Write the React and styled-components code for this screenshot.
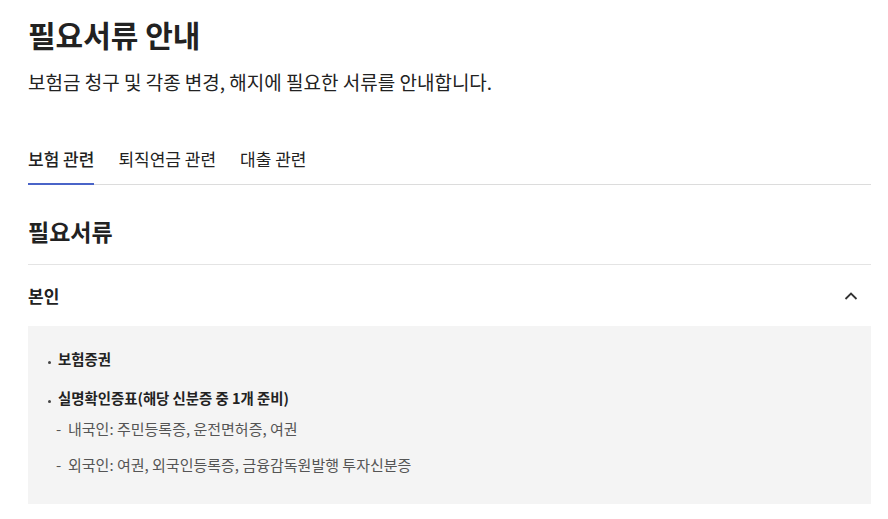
import React, { useState } from "react";
import styled, { createGlobalStyle } from "styled-components";

const GlobalStyle = createGlobalStyle`
  body {
    margin: 0;
    background: #ffffff;
    font-family: "Noto Sans CJK KR", "Noto Sans", sans-serif;
    color: #222222;
  }
  * { box-sizing: border-box; }
`;

const tabs = ["보험 관련", "퇴직연금 관련", "대출 관련"];

export default function App() {
  const [active, setActive] = useState(0);
  const [open, setOpen] = useState(true);

  return (
    <>
      <GlobalStyle />
      <StyledPage>
        <StyledTitle>필요서류 안내</StyledTitle>
        <StyledLead>보험금 청구 및 각종 변경, 해지에 필요한 서류를 안내합니다.</StyledLead>

        <StyledTabs>
          {tabs.map((t, i) => (
            <StyledTab key={t} $active={i === active} onClick={() => setActive(i)}>
              {t}
            </StyledTab>
          ))}
        </StyledTabs>

        <StyledSectionTitle>필요서류</StyledSectionTitle>

        <StyledAccordionHead onClick={() => setOpen(!open)}>
          <span>본인</span>
          <svg width="14" height="8" viewBox="0 0 14 8" fill="none">
            <path
              d={open ? "M1.5 7L7 1.5L12.5 7" : "M1.5 1L7 6.5L12.5 1"}
              stroke="#333"
              strokeWidth="1.8"
            />
          </svg>
        </StyledAccordionHead>

        {open && (
          <StyledPanel>
            <StyledItem>보험증권</StyledItem>
            <StyledItem>실명확인증표(해당 신분증 중 1개 준비)</StyledItem>
            <StyledSubItem>내국인: 주민등록증, 운전면허증, 여권</StyledSubItem>
            <StyledSubItem>외국인: 여권, 외국인등록증, 금융감독원발행 투자신분증</StyledSubItem>
          </StyledPanel>
        )}
      </StyledPage>
    </>
  );
}

const StyledPage = styled.main`
  padding: 12px 17px 0 28px;
`;

const StyledTitle = styled.h1`
  margin: 0;
  font-size: 30px;
  font-weight: 700;
  line-height: 44px;
  color: #222;
`;

const StyledLead = styled.p`
  margin: 12px 0 0;
  font-size: 19px;
  line-height: 28px;
  color: #222;
`;

const StyledTabs = styled.nav`
  display: flex;
  gap: 24px;
  margin-top: 51px;
  border-bottom: 1px solid #dcdcdc;
`;

const StyledTab = styled.button`
  border: 0;
  background: none;
  padding: 0 0 12px;
  margin-bottom: -1px;
  font-family: inherit;
  font-size: 17px;
  line-height: 24px;
  color: #222;
  font-weight: ${(p) => (p.$active ? 500 : 400)};
  border-bottom: 2px solid ${(p) => (p.$active ? "#4a64c8" : "transparent")};
  cursor: pointer;
`;

const StyledSectionTitle = styled.h2`
  margin: 29px 0 0;
  font-size: 23px;
  font-weight: 700;
  line-height: 34px;
  padding-bottom: 16px;
  border-bottom: 1px solid #e4e4e4;
`;

const StyledAccordionHead = styled.div`
  display: flex;
  align-items: center;
  justify-content: space-between;
  height: 61px;
  padding-right: 13px;
  font-size: 17px;
  font-weight: 700;
  color: #222;
  cursor: pointer;
`;

const StyledPanel = styled.div`
  background: #f4f4f4;
  padding: 22px 19px 28px;
`;

const StyledItem = styled.div`
  position: relative;
  padding-left: 11px;
  font-size: 14.4px;
  font-weight: 700;
  line-height: 22px;
  color: #222;
  & + & {
    margin-top: 17px;
  }
  &::before {
    content: "";
    position: absolute;
    left: 1px;
    top: 13px;
    width: 3px;
    height: 3px;
    border-radius: 50%;
    background: #444;
  }
`;

const StyledSubItem = styled.div`
  position: relative;
  padding-left: 21px;
  margin-top: 9px;
  font-size: 15px;
  line-height: 22px;
  color: #555;
  & + & {
    margin-top: 14px;
  }
  &::before {
    content: "-";
    position: absolute;
    left: 9px;
    top: 0;
  }
`;
